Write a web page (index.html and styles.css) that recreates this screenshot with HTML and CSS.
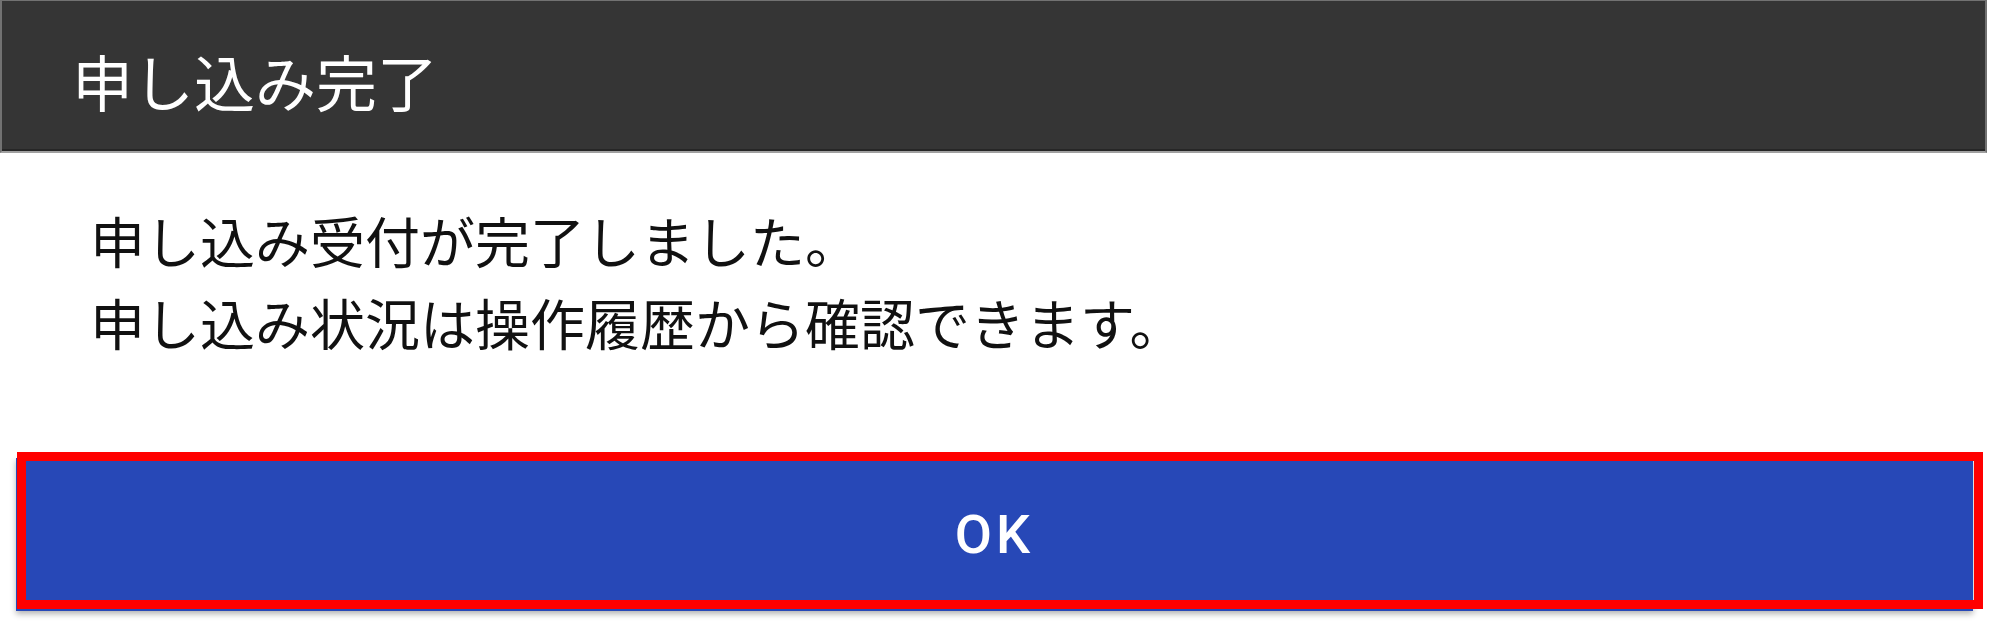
FILE: index.html
```html
<!DOCTYPE html>
<html lang="ja">
<head>
  <meta charset="UTF-8">
  <title>申し込み完了</title>
  <meta name="viewport" content="width=device-width, initial-scale=1">
  <link rel="stylesheet" href="styles.css">
</head>
<body>

<div class="dialogo">
  <header class="cabecera">
    <h1>申し込み完了</h1>
  </header>

  <div class="mensaje">
    <p>申し込み受付が完了しました。</p>
    <p>申し込み状況は操作履歴から確認できます。</p>
  </div>

  <div class="acciones">
    <button class="btn-ok">OK</button>
    <div class="marca"></div>
  </div>
</div>

</body>
</html>
```

FILE: styles.css
```css
* {
  box-sizing: border-box;
}

body {
  margin: 0;
  background: #ffffff;
  font-family: "Noto Sans CJK JP", "Noto Sans", sans-serif;
}

.dialogo {
  width: 1989px;
  height: 623px;
  overflow: hidden;
}

.cabecera {
  width: 1987px;
  height: 153px;
  background-color: #353535;
  border: 2px solid #727272;
  border-top-width: 1px;
  border-bottom: 2px solid #a0a0a0;
  box-shadow: inset 0 -2px 0 #262626;
  padding: 49px 0 0 70px;
}

.cabecera h1 {
  margin: 0;
  font-size: 61px;
  line-height: 61px;
  font-weight: 400;
  color: #ffffff;
}

.mensaje {
  padding: 45px 0 0 90px;
  height: 305px;
}

.mensaje p {
  margin: 0;
  font-size: 55px;
  line-height: 82px;
  color: #111111;
}

.acciones {
  position: relative;
  margin: 0 16px 0 16px;
}

.btn-ok {
  display: block;
  width: 100%;
  height: 153px;
  border: none;
  border-radius: 0;
  background-color: #2748b7;
  color: #ffffff;
  font-family: Roboto, "Liberation Sans", sans-serif;
  font-size: 54px;
  font-weight: 500;
  letter-spacing: 4px;
  box-shadow: 0 3px 6px rgba(0, 0, 0, 0.3);
  cursor: pointer;
}

.marca {
  position: absolute;
  left: 1px;
  top: -6px;
  width: 1966px;
  height: 157px;
  border: 9px solid #ff0000;
  pointer-events: none;
}
```
